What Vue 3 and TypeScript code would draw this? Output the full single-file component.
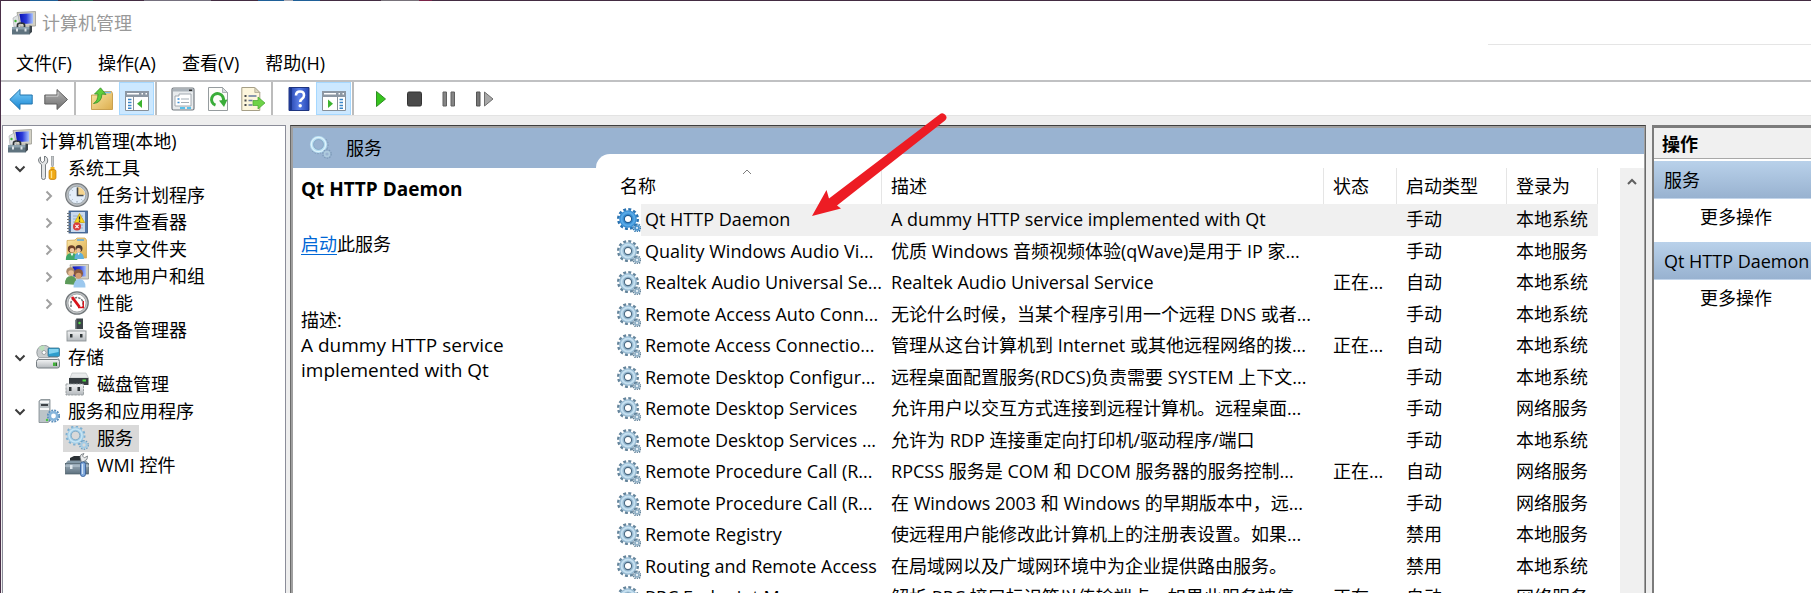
<script setup lang="ts">
interface TreeNode {
  label: string
  icon: string
  level: 0 | 1 | 2
  state?: 'open' | 'closed'
  selected?: boolean
}

interface Service {
  name: string
  description: string
  status: string
  startup: string
  logon: string
  selected?: boolean
}

interface Tool {
  id: string
  label: string
  active?: boolean
}

const menus: string[] = ['文件(F)', '操作(A)', '查看(V)', '帮助(H)']

const toolGroups: Tool[][] = [
  [
    { id: 'back', label: '后退' },
    { id: 'forward', label: '前进' },
  ],
  [
    { id: 'folder-up', label: '上一级' },
    { id: 'tree-pane', label: '显示/隐藏控制台树', active: true },
  ],
  [
    { id: 'properties', label: '属性' },
    { id: 'refresh', label: '刷新' },
    { id: 'export', label: '导出列表' },
  ],
  [
    { id: 'help', label: '帮助' },
    { id: 'action-pane', label: '显示/隐藏操作窗格', active: true },
  ],
  [
    { id: 'play', label: '启动服务' },
    { id: 'stop', label: '停止服务' },
    { id: 'pause', label: '暂停服务' },
    { id: 'restart', label: '重启动服务' },
  ],
]

const tree: TreeNode[] = [
  { label: '计算机管理(本地)', icon: 'computer', level: 0 },
  { label: '系统工具', icon: 'tools', level: 1, state: 'open' },
  { label: '任务计划程序', icon: 'clock', level: 2, state: 'closed' },
  { label: '事件查看器', icon: 'events', level: 2, state: 'closed' },
  { label: '共享文件夹', icon: 'shared', level: 2, state: 'closed' },
  { label: '本地用户和组', icon: 'users', level: 2, state: 'closed' },
  { label: '性能', icon: 'gauge', level: 2, state: 'closed' },
  { label: '设备管理器', icon: 'device', level: 2 },
  { label: '存储', icon: 'storage', level: 1, state: 'open' },
  { label: '磁盘管理', icon: 'disk', level: 2 },
  { label: '服务和应用程序', icon: 'server', level: 1, state: 'open' },
  { label: '服务', icon: 'gears', level: 2, selected: true },
  { label: 'WMI 控件', icon: 'toolbox', level: 2 },
]

const services: Service[] = [
  { name: 'Qt HTTP Daemon', description: 'A dummy HTTP service implemented with Qt', status: '', startup: '手动', logon: '本地系统', selected: true },
  { name: 'Quality Windows Audio Vi...', description: '优质 Windows 音频视频体验(qWave)是用于 IP 家...', status: '', startup: '手动', logon: '本地服务' },
  { name: 'Realtek Audio Universal Se...', description: 'Realtek Audio Universal Service', status: '正在...', startup: '自动', logon: '本地系统' },
  { name: 'Remote Access Auto Conn...', description: '无论什么时候，当某个程序引用一个远程 DNS 或者...', status: '', startup: '手动', logon: '本地系统' },
  { name: 'Remote Access Connectio...', description: '管理从这台计算机到 Internet 或其他远程网络的拨...', status: '正在...', startup: '自动', logon: '本地系统' },
  { name: 'Remote Desktop Configur...', description: '远程桌面配置服务(RDCS)负责需要 SYSTEM 上下文...', status: '', startup: '手动', logon: '本地系统' },
  { name: 'Remote Desktop Services', description: '允许用户以交互方式连接到远程计算机。远程桌面...', status: '', startup: '手动', logon: '网络服务' },
  { name: 'Remote Desktop Services ...', description: '允许为 RDP 连接重定向打印机/驱动程序/端口', status: '', startup: '手动', logon: '本地系统' },
  { name: 'Remote Procedure Call (R...', description: 'RPCSS 服务是 COM 和 DCOM 服务器的服务控制...', status: '正在...', startup: '自动', logon: '网络服务' },
  { name: 'Remote Procedure Call (R...', description: '在 Windows 2003 和 Windows 的早期版本中，远...', status: '', startup: '手动', logon: '网络服务' },
  { name: 'Remote Registry', description: '使远程用户能修改此计算机上的注册表设置。如果...', status: '', startup: '禁用', logon: '本地服务' },
  { name: 'Routing and Remote Access', description: '在局域网以及广域网环境中为企业提供路由服务。', status: '', startup: '禁用', logon: '本地系统' },
  { name: 'RPC Endpoint Mapper', description: '解析 RPC 接口标识符以传输端点。如果此服务被停...', status: '正在...', startup: '自动', logon: '网络服务' },
]

const actionSections: string[] = ['服务', 'Qt HTTP Daemon']
</script>

<template>
  <div class="window" lang="zh-CN">
    <svg class="sprite" aria-hidden="true">
      <defs>
        <linearGradient id="g-blue" x1="0" y1="0" x2="0" y2="1"><stop offset="0" stop-color="#7fd0fa" /><stop offset="1" stop-color="#1583d2" /></linearGradient>
        <linearGradient id="g-grey" x1="0" y1="0" x2="0" y2="1"><stop offset="0" stop-color="#b5b5b5" /><stop offset="1" stop-color="#6d6d6d" /></linearGradient>
        <linearGradient id="g-folder" x1="0" y1="0" x2="1" y2="1"><stop offset="0" stop-color="#fbe6a6" /><stop offset="1" stop-color="#dcae4e" /></linearGradient>
        <linearGradient id="g-screen" x1="0" y1="0" x2="1" y2="0"><stop offset="0" stop-color="#0a12b4" /><stop offset=".5" stop-color="#2a3ad8" /><stop offset="1" stop-color="#a9c4ff" /></linearGradient>
        <linearGradient id="g-help" x1="0" y1="0" x2="1" y2="0"><stop offset="0" stop-color="#1f3da6" /><stop offset=".5" stop-color="#5b80e8" /><stop offset="1" stop-color="#2545b4" /></linearGradient>
        <linearGradient id="g-metal" x1="0" y1="0" x2="0" y2="1"><stop offset="0" stop-color="#f3f4f5" /><stop offset="1" stop-color="#b3b8bc" /></linearGradient>
        <linearGradient id="g-steel" x1="0" y1="0" x2="0" y2="1"><stop offset="0" stop-color="#9fb0bd" /><stop offset="1" stop-color="#5d707e" /></linearGradient>
      </defs>

      <symbol id="i-computer" viewBox="0 0 24 24">
        <path d="M5 1.500 23.500 .5v14.500L8 15.500z" fill="#d3d1c5" stroke="#9b9b93" stroke-width=".8" />
        <path d="M7.500 3 21 2.200V12.500L9 13z" fill="url(#g-screen)" />
        <path d="M1 7l5-3 2 11-6 1z" fill="#dfe2e4" stroke="#a2a6aa" stroke-width=".6" />
        <circle cx="3.500" cy="10" r="1.200" fill="#3eb536" />
        <path d="M5.500 16v-2q0-2 3.500-2t3.500 2v2" fill="none" stroke="#2d3336" stroke-width="1.700" />
        <path d="M0 16h19l-1 7.500H0z" fill="#5f737f" /><path d="M0 16h19v2.500H0z" fill="#8ba0ac" />
        <path d="M4 17.500h2v3H4zM12.500 17.500h2v3h-2z" fill="#dde4e8" /><path d="M17.500 14.500 20 15v6l-2.500 2z" fill="#3c454b" />
      </symbol>
      <symbol id="i-tools" viewBox="0 0 24 24">
        <path d="M2.500 1v4l2 1.500 2-1.500V0q4 1.500 3 6-.3 1.500-2 2.500v13q0 2-2 2t-2-2v-13Q.5 7 .5 4 .7 2 2.500 1z" transform="translate(2)" fill="#e2e4e5" stroke="#777d81" stroke-width="1" />
        <path d="M15.500 0h2v9l-1 3-1-3z" fill="#c5c8ca" stroke="#82878a" stroke-width=".6" />
        <path d="M14.500 11h4v2l-1 1.200h-2l-1-1.200z" fill="#f3b521" /><rect x="13" y="13.500" width="7" height="10" rx="2" fill="#f0aa16" stroke="#bd7b08" stroke-width=".7" /><path d="M15.500 15v7" stroke="#ffe18a" stroke-width="1.300" />
      </symbol>
      <symbol id="i-clock" viewBox="0 0 24 24">
        <circle cx="12" cy="12" r="11.300" fill="#b9bdc0" stroke="#777b7e" stroke-width="1.200" /><circle cx="12" cy="12" r="8.800" fill="#e4eefa" stroke="#8d969c" stroke-width=".7" />
        <path d="M12 12V4a8 8 0 0 1 8 8z" fill="#f5d48f" /><path d="M12.500 4.500v8h6" fill="none" stroke="#454a4e" stroke-width="1.600" />
        <path d="M12 19.500v-1.300M4.500 12h1.300M6.700 6.700l.8.800M6.700 17.300l.8-.8M17.300 17.300l-.8-.8" stroke="#8798a8" stroke-width="1" />
      </symbol>
      <symbol id="i-events" viewBox="0 0 24 24">
        <rect x="4" y="1" width="18.500" height="22" fill="#4f75a9" stroke="#3b587f" stroke-width=".8" /><path d="M6 2h14v20H6z" fill="#c9d9ed" /><path d="M8 6h10M8 9h10M8 12h10M8 15h10M8 18h10" stroke="#88a4c8" stroke-width=".8" />
        <path d="M2 3.500h4M2 6.500h4M2 9.500h4M2 12.500h4M2 15.500h4M2 18.500h4M2 21.500h4" stroke="#6c747b" stroke-width="1.200" />
        <path d="M14.500 3.500 19.500 12.500h-10z" fill="#f9d923" stroke="#c8a107" stroke-width=".7" /><path d="M14.500 6.500v3M14.500 10.400v1.300" stroke="#222" stroke-width="1.300" />
        <circle cx="12" cy="16.500" r="4" fill="#d93c3c" /><path d="m10.400 14.900 3.200 3.200m0-3.200-3.200 3.200" stroke="#fff" stroke-width="1.100" />
      </symbol>
      <symbol id="i-shared" viewBox="0 0 24 24">
        <path d="M2 21V3.500L10 3l2-2h8l1.500 2v18z" fill="url(#g-folder)" stroke="#cba24b" stroke-width=".7" /><path d="M12 3h7" stroke="#5aa9e0" stroke-width="1.500" />
        <circle cx="6.500" cy="12" r="3.700" fill="#6e3f26" /><circle cx="7" cy="13.300" r="2.300" fill="#f3c9a0" /><path d="M.8 23q0-7 6-7t5.500 7z" fill="#3fa768" /><path d="m5.500 16.200 1.500 3 1.500-3z" fill="#fff" />
        <circle cx="14" cy="11.500" r="3.500" fill="#4f3a2e" /><circle cx="13.500" cy="13.200" r="2.300" fill="#f0c49c" /><path d="M9.500 22q0-6.500 4.500-6.500T19 22z" fill="#5fb0de" /><path d="m12.500 15.800 1.200 2.500 1.200-2.500z" fill="#fff" />
      </symbol>
      <symbol id="i-users" viewBox="0 0 24 24">
        <path d="M5 .8 23.500 .3V15H7z" fill="#d3d1c5" stroke="#9b9b93" stroke-width=".8" /><path d="M7.500 2.500 21 2v10.500H8.500z" fill="url(#g-screen)" />
        <circle cx="5.500" cy="7.500" r="4.200" fill="#a98a6b" /><circle cx="6" cy="9" r="2.800" fill="#e9bd94" /><path d="M0 20q0-8 6-8t6 9z" fill="#5c9a59" />
        <circle cx="13.500" cy="9.500" r="4.500" fill="#8b5a3c" /><circle cx="13.500" cy="11.700" r="3" fill="#d49c70" /><path d="M8.500 23.500q0-8.500 6-8.500t6 8.500z" fill="#9cc8ee" />
      </symbol>
      <symbol id="i-gauge" viewBox="0 0 24 24">
        <circle cx="12" cy="12" r="11.200" fill="#c3c6c8" stroke="#74797c" stroke-width="1.300" /><circle cx="12" cy="12" r="9" fill="#fff" stroke="#8f9497" stroke-width=".7" />
        <path d="M6 16V11q1.500-4 6-4.500 4.500.5 6 4.500v5" fill="none" stroke="#6e7477" stroke-width="1.500" stroke-dasharray="2.500 1" /><path d="m7 6 7.500 10" stroke="#d8131b" stroke-width="2.800" /><path d="M18.300 10v6.500H13" fill="none" stroke="#d8131b" stroke-width="1.400" />
      </symbol>
      <symbol id="i-device" viewBox="0 0 24 24">
        <path d="m10 3 1.500-2.500H18V14h-8z" fill="#3d4549" /><path d="m10 3 1.500-2.500V14H10z" fill="#7c868b" /><circle cx="14.500" cy="5" r="1.200" fill="#54db46" />
        <path d="M2 13 5 11h13l2.500 2z" fill="#e8eaeb" /><rect x="2" y="13" width="19" height="10" fill="url(#g-metal)" stroke="#8f9598" stroke-width=".9" /><path d="M5 16h2.500v3.500H5zM15 16h2.500v3.500H15z" fill="#32383b" />
      </symbol>
      <symbol id="i-storage" viewBox="0 0 24 24">
        <circle cx="8" cy="7.500" r="7.200" fill="#c8ccce" stroke="#838a8e" stroke-width=".8" /><path d="M8 7.500 2.500 3a7 7 0 0 1 6-2.500z" fill="#b9dfba" /><circle cx="8" cy="7.500" r="2" fill="#fff" stroke="#8b9296" stroke-width=".8" />
        <rect x="12" y="3" width="11.500" height="8.500" rx="1" fill="#2d9dcc" stroke="#3d6f88" stroke-width=".8" /><path d="M13 4h9.500v3L13 9z" fill="#83d3f0" />
        <path d="M1 15 3.500 12.500h18L23.500 15z" fill="#f1f2f3" stroke="#92989b" stroke-width=".7" /><rect x=".5" y="14.500" width="23" height="8.500" rx="2" fill="url(#g-metal)" stroke="#767e83" stroke-width="1" /><path d="M17 17.500h2.500V21H17z" fill="#3eb536" /><path d="M19.500 17.500H21V21h-1.500z" fill="#276a26" />
      </symbol>
      <symbol id="i-disk" viewBox="0 0 24 24">
        <path d="M5 6 7 1h14l2.500 5z" fill="#e8eaeb" stroke="#b3b8bb" stroke-width=".6" /><path d="M4 6h19.500v7H4z" fill="#363c40" /><path d="M17.500 8.500H21" stroke="#4cd343" stroke-width="2" />
        <rect x="1" y="12" width="17.500" height="11" fill="url(#g-metal)" stroke="#92989b" stroke-width=".9" stroke-dasharray="2.500 .7" /><path d="M4 15h2.500v4H4zM12.500 15H15v4h-2.500z" fill="#32383b" />
      </symbol>
      <symbol id="i-server" viewBox="0 0 24 24">
        <path d="M3 2 5 .5h9V22l-2 1.500H3z" fill="#bcc4c8" stroke="#7f888d" stroke-width=".8" /><path d="M4 3h9M4 10h9" stroke="#f5f7f8" stroke-width="2" /><path d="M5 6h7" stroke="#2f3539" stroke-width="1.800" /><circle cx="11" cy="21" r="1.200" fill="#4cc63f" />
        <circle cx="17.500" cy="17" r="5.600" fill="none" stroke="#5d8fba" stroke-width="2" stroke-dasharray="1.900 1.032" /><circle cx="17.500" cy="17" r="3.700" fill="#fff" stroke="#86b5dc" stroke-width="2.600" />
      </symbol>
      <symbol id="i-gears" viewBox="0 0 24 24">
        <circle cx="10.500" cy="9.500" r="9" fill="none" stroke="#7db0d2" stroke-width="2" stroke-dasharray="2.300 2.410" /><circle cx="10.500" cy="9.500" r="6.300" fill="none" stroke="#9ccae6" stroke-width="4" /><circle cx="10.500" cy="9.500" r="6.500" fill="none" stroke="#c7e5f4" stroke-width="1.600" /><circle cx="10.500" cy="9.500" r="4.300" fill="none" stroke="#6e9cba" stroke-width=".7" />
        <circle cx="19" cy="19" r="4.200" fill="none" stroke="#72a3c5" stroke-width="1.500" stroke-dasharray="1.500 1.140" /><circle cx="19" cy="19" r="2.600" fill="none" stroke="#a3cbe5" stroke-width="1.900" />
      </symbol>
      <symbol id="i-gears-pale" viewBox="0 0 24 24">
        <circle cx="9.500" cy="8.500" r="6.800" fill="none" stroke="#b5dcf0" stroke-width="3.600" /><circle cx="9.500" cy="8.500" r="7.200" fill="none" stroke="#dff3fb" stroke-width="1.200" /><circle cx="9.500" cy="8.500" r="5" fill="none" stroke="#7599b8" stroke-width=".6" />
        <path d="M17 3q4 5 1 10M3 15q4 4 9 2" fill="none" stroke="#7e9cb9" stroke-width="1" stroke-dasharray="1.500 1.500" />
        <circle cx="18" cy="18" r="4.200" fill="none" stroke="#7e9cb9" stroke-width="1.300" stroke-dasharray="1.500 1.140" /><circle cx="18" cy="18" r="2.400" fill="none" stroke="#aecbde" stroke-width="1.600" />
      </symbol>
      <symbol id="i-service" viewBox="0 0 24 24">
        <circle cx="11" cy="11" r="9.700" fill="none" stroke="#64849b" stroke-width="2.600" stroke-dasharray="2.900 2.179" /><circle cx="11" cy="11" r="6.200" fill="#fff" stroke="#98bbd3" stroke-width="5.200" /><circle cx="11" cy="11" r="6.500" fill="none" stroke="#c6e0f0" stroke-width="1.900" /><circle cx="11" cy="11" r="3.600" fill="none" stroke="#4d6b83" stroke-width="1.100" />
        <circle cx="20" cy="20" r="3.600" fill="none" stroke="#64849b" stroke-width="1.900" stroke-dasharray="1.300 .962" /><circle cx="20" cy="20" r="2" fill="#e6f0f6" stroke="#8fafc5" stroke-width="1.700" />
      </symbol>
      <symbol id="i-service-on" viewBox="0 0 24 24">
        <circle cx="11" cy="11" r="9.700" fill="none" stroke="#2a72b0" stroke-width="2.600" stroke-dasharray="2.900 2.179" /><circle cx="11" cy="11" r="6.200" fill="#fff" stroke="#3a8fd4" stroke-width="5.200" /><circle cx="11" cy="11" r="6.500" fill="none" stroke="#58a9e6" stroke-width="1.900" /><circle cx="11" cy="11" r="3.600" fill="none" stroke="#1f5c93" stroke-width="1.100" />
        <circle cx="20" cy="20" r="3.600" fill="none" stroke="#3479b0" stroke-width="1.900" stroke-dasharray="1.300 .962" /><circle cx="20" cy="20" r="2" fill="#cfe4f5" stroke="#4a92cc" stroke-width="1.700" />
      </symbol>
      <symbol id="i-toolbox" viewBox="0 0 24 24">
        <path d="M5 8V5l4-2h7v5" fill="#2b3135" /><path d="M0 11 3 7.500h18L24 11z" fill="#8398a6" /><rect x=".5" y="10.500" width="23" height="10.500" fill="url(#g-steel)" stroke="#4e5e69" stroke-width=".7" /><path d="M0 13h24" stroke="#bccbd5" stroke-width="1" /><path d="M5 12h2.500v4H5z" fill="#dfe7ec" />
        <path d="M15 4q0-3 4-3.500L17.500 3l1.800 1.800L22.500 3q.5 4-3 5l-3 1.500z" fill="#e9ebec" stroke="#6d7478" stroke-width=".8" /><rect x="15.500" y="9" width="5" height="14.500" rx="2.300" fill="#7fa9dc" stroke="#39609b" stroke-width=".9" /><path d="M17.500 11v10" stroke="#d4e5f8" stroke-width="1.300" />
      </symbol>

      <symbol id="i-back" viewBox="0 0 24 24"><path d="M.8 12.500 11 2.500V8h12.200v9H11v5.500z" fill="url(#g-blue)" stroke="#2374ad" stroke-width="1" /></symbol>
      <symbol id="i-forward" viewBox="0 0 24 24"><path d="M23.500 12.500 13 2.500V8H.8v9H13v5.500z" fill="url(#g-grey)" stroke="#5f5f5f" stroke-width="1" /><path d="M2 9.200h12V5" fill="none" stroke="#c9c9c9" stroke-width="1" /></symbol>
      <symbol id="i-folder-up" viewBox="0 0 24 24"><path d="M1.500 22.500V8H10l2-3.500h9.500l1 2v16z" fill="url(#g-folder)" stroke="#c49a45" stroke-width=".9" /><path d="M13 5.500h8" stroke="#7cbde9" stroke-width="1.600" /><path d="M3.500 16.500Q8 14 8 7H4.500L10.500 .8l5.500 6.700-4-.5q-.5 9-8.500 9.500z" fill="#5fcd3a" stroke="#37922a" stroke-width=".8" /></symbol>
      <symbol id="i-tree-pane" viewBox="0 0 24 24"><path d="M.5 4.500h23v19H.5z" fill="#fff" stroke="#868f98" stroke-width="1" /><path d="M0 4h24v6H0z" fill="#8c97a3" /><path d="M2 6.800h12M16.500 6.800h1.500M20.500 6.800H22" stroke="#fff" stroke-width="1.500" /><path d="M8.500 10v13" stroke="#868f98" stroke-width="1" /><path d="M3 12.500h3.500M3 15.500h3.500M3 18.500h3.500M3 21.300h3.500" stroke="#3b86c8" stroke-width="1.400" /><path d="M17 12.500v8.500l-5-4.300z" fill="#3cb32f" /></symbol>
      <symbol id="i-action-pane" viewBox="0 0 24 24"><path d="M.5 4.500h23v19H.5z" fill="#fff" stroke="#868f98" stroke-width="1" /><path d="M0 4h24v6H0z" fill="#8c97a3" /><path d="M2 6.800h12M16.500 6.800h1.500M20.500 6.800H22" stroke="#fff" stroke-width="1.500" /><path d="M15.500 10v13" stroke="#868f98" stroke-width="1" /><path d="M17.500 12.500H21M17.500 15.500H21M17.500 18.500H21M17.500 21.300H21" stroke="#3b86c8" stroke-width="1.400" /><path d="M6 12.500v8.500l5-4.300z" fill="#3cb32f" /></symbol>
      <symbol id="i-properties" viewBox="0 0 24 24"><rect x="1" y="1" width="22" height="22" rx="1.500" fill="#e8ebed" stroke="#737a80" stroke-width="1.200" /><path d="M2 2h20v2.500H2z" fill="#aab2b9" /><path d="M18 3.300h3" stroke="#333" stroke-width="1.500" /><path d="M4 9h4V7h12v12H4z" fill="#fff" stroke="#9aa2a9" stroke-width=".9" /><path d="M6.500 12h2M6.500 15.500h2" stroke="#3b8fd6" stroke-width="1.600" /><path d="M10 12h8M10 15.500h8" stroke="#a4adb5" stroke-width="1.200" /><path d="M9 21h5M16 21h4" stroke="#58c1ec" stroke-width="2" /></symbol>
      <symbol id="i-refresh" viewBox="0 0 24 24"><path d="M2.500.5h14l5 5v18h-19z" fill="#fdfdfa" stroke="#969c9f" stroke-width="1" /><path d="M16.500.5v5h5z" fill="#d9dddf" stroke="#969c9f" stroke-width=".7" /><path d="M9.500 18.200a6 6 0 1 1 7.800-4" fill="none" stroke="#3aad38" stroke-width="3" /><path d="m13 13.500 8.500-1-3.500 7.500z" fill="#3aad38" /></symbol>
      <symbol id="i-export" viewBox="0 0 24 24"><path d="M.8.5h13l5 5v18H.8z" fill="#fdf6dc" stroke="#a69f87" stroke-width="1" /><path d="M13.800.5v5h5z" fill="#dcd6be" stroke="#a69f87" stroke-width=".7" /><path d="M3.500 9h2M3.500 13.500h2M3.500 18h2" stroke="#4a4a4a" stroke-width="1.800" /><path d="M7.500 9h8M7.500 13.500h4M7.500 18h4" stroke="#667a9e" stroke-width="1.400" /><path d="M12 13.500h5v-3.500l7 6-7 6v-3.500h-5z" fill="#6ed348" stroke="#45a52f" stroke-width=".7" /></symbol>
      <symbol id="i-help" viewBox="0 0 24 24"><path d="M2 .5h20v23H2z" fill="url(#g-help)" stroke="#1e3580" stroke-width="1" /><path d="M4 1v22" stroke="#15307f" stroke-width="1.400" /><path d="M9 8.500q0-4 4-4t4 3.700q0 2.300-2 3.600-1.800 1.200-1.800 3.200" fill="none" stroke="#fff" stroke-width="2.600" /><circle cx="13.200" cy="18.700" r="1.700" fill="#fff" /></symbol>
      <symbol id="i-play" viewBox="0 0 24 24"><path d="M8.500 4.500v15l9-7.500z" fill="#37c41e" stroke="#2f8f23" stroke-width="1" /></symbol>
      <symbol id="i-stop" viewBox="0 0 24 24"><rect x="4.500" y="5" width="14" height="14" rx="1.500" fill="#4a4a4a" stroke="#333" stroke-width="1" /></symbol>
      <symbol id="i-pause" viewBox="0 0 24 24"><path d="M5 5h3.500v14H5zM13 5h3.500v14H13z" fill="#858585" stroke="#606060" stroke-width="1" /></symbol>
      <symbol id="i-restart" viewBox="0 0 24 24"><path d="M3.500 5H7v14H3.500z" fill="#777" stroke="#555" stroke-width="1" /><path d="M11.500 5v14l8.500-7z" fill="#a8a8a8" stroke="#6d6d6d" stroke-width="1" /></symbol>
    </svg>

    <div class="backdrop"></div>

    <header class="titlebar">
      <svg class="icon"><use href="#i-computer" /></svg>
      <h1>计算机管理</h1>
      <span class="title-rule"></span>
    </header>

    <nav class="menubar">
      <button v-for="menu in menus" :key="menu" type="button">{{ menu }}</button>
    </nav>

    <div class="toolbar" role="toolbar">
      <div v-for="(group, index) in toolGroups" :key="index" class="tool-group">
        <button
          v-for="tool in group"
          :key="tool.id"
          type="button"
          :class="{ active: tool.active }"
          :aria-label="tool.label"
        >
          <svg class="icon"><use :href="`#i-${tool.id}`" /></svg>
        </button>
      </div>
    </div>

    <main class="workspace">
      <ul class="tree">
        <li v-for="node in tree" :key="node.label" :class="`level-${node.level}`">
          <button v-if="node.state" type="button" class="twisty" :class="node.state" :aria-label="node.label">
            <svg viewBox="0 0 12 12"><path :d="node.state === 'open' ? 'M1.500 3.500 6 8l4.500-4.500' : 'M3.500 1.500 8 6l-4.500 4.500'" /></svg>
          </button>
          <span v-else-if="node.level > 0" class="twisty"></span>
          <span class="node" :class="{ selected: node.selected }">
            <svg class="icon"><use :href="`#i-${node.icon}`" /></svg>
            {{ node.label }}
          </span>
        </li>
      </ul>

      <section class="view">
        <div class="view-header">
          <svg class="icon"><use href="#i-gears-pale" /></svg>
          <h2>服务</h2>
        </div>

        <aside class="detail">
          <h3>Qt HTTP Daemon</h3>
          <p class="action"><a href="#start">启动</a>此服务</p>
          <p class="caption">描述:</p>
          <p class="text">A dummy HTTP service implemented with Qt</p>
        </aside>

        <div class="list">
          <table>
            <colgroup>
              <col class="col-name" />
              <col />
              <col class="col-status" />
              <col class="col-startup" />
              <col class="col-logon" />
            </colgroup>
            <thead>
              <tr>
                <th>
                  名称
                  <svg class="sort" viewBox="0 0 10 6"><path d="M1 5l4-4 4 4" /></svg>
                </th>
                <th>描述</th>
                <th>状态</th>
                <th>启动类型</th>
                <th>登录为</th>
              </tr>
            </thead>
            <tbody>
              <tr v-for="(service, index) in services" :key="index" :class="{ selected: service.selected }">
                <td>
                  <div class="name">
                    <svg class="icon"><use :href="service.selected ? '#i-service-on' : '#i-service'" /></svg>
                    <span>{{ service.name }}</span>
                  </div>
                </td>
                <td>{{ service.description }}</td>
                <td>{{ service.status }}</td>
                <td>{{ service.startup }}</td>
                <td>{{ service.logon }}</td>
              </tr>
            </tbody>
          </table>
          <div class="scrollbar">
            <button type="button" aria-label="向上滚动">
              <svg viewBox="0 0 10 8"><path d="M1 6l4-4 4 4" /></svg>
            </button>
          </div>
        </div>
      </section>

      <aside class="actions">
        <h2>操作</h2>
        <section v-for="section in actionSections" :key="section">
          <h3>{{ section }}</h3>
          <button type="button">更多操作</button>
        </section>
      </aside>
    </main>

    <svg class="pointer" viewBox="0 0 140 106" aria-hidden="true">
      <path d="M130.500 1.500a4 4 0 0 1 5.500 6L28 92.500l4 3L3 103 17.500 77l2.500 8.500z" />
    </svg>
  </div>
</template>

<style>
body {
  margin: 0;
}
</style>

<style scoped>
.window {
  position: relative;
  box-sizing: border-box;
  display: flex;
  flex-direction: column;
  height: 100vh;
  overflow: hidden;
  border-left: 1px solid #4a2f48;
  background: #fff;
  color: #000;
  font: 18px/26px 'Open Sans', 'Noto Sans CJK SC', sans-serif;
}

h1, h2, h3, p, ul {
  margin: 0;
  padding: 0;
  font-size: inherit;
  font-weight: 400;
}

button {
  padding: 0;
  border: 0;
  background: none;
  color: inherit;
  font: inherit;
}

.sprite {
  position: absolute;
  width: 0;
  height: 0;
}

.icon {
  display: block;
  flex: none;
  width: 24px;
  height: 24px;
}

/* Sliver of the desktop that shows above the window */
.backdrop {
  flex: none;
  height: 1px;
  background: linear-gradient(
    90deg,
    #432c42 29px, #1f6098 29px 57px, #432c42 57px 70px, #2f6b55 70px 92px,
    #432c42 92px 143px, #75707e 143px 210px, #432c42 210px 257px, #1f6098 257px 283px,
    #a9a9b2 283px 292px, #1f6098 292px 319px, #432c42 319px 380px, #77727a 380px 418px,
    #7a2348 418px 431px, #432c42 431px
  );
}

.titlebar {
  display: flex;
  flex: none;
  align-items: center;
  gap: 6px;
  box-sizing: border-box;
  height: 47px;
  padding: 0 0 3px 11px;
  color: #999;
}

.title-rule {
  align-self: flex-end;
  width: 323px;
  height: 1px;
  margin-left: auto;
  background: #e5e5e5;
}

.menubar {
  display: flex;
  flex: none;
  align-items: flex-start;
  gap: 26px;
  height: 32px;
  padding-left: 15px;
  border-bottom: 2px solid #c0c1c3;
}

.menubar button {
  height: 30px;
}

.toolbar {
  display: flex;
  flex: none;
  height: 33px;
  padding-left: 2px;
  border-bottom: 1px solid #e3e3e3;
}

.tool-group {
  display: flex;
}

.tool-group + .tool-group {
  margin-left: 1px;
  padding-left: 8px;
  border-left: 2px solid #bcbcbc;
}

.tool-group button {
  box-sizing: border-box;
  display: flex;
  align-items: center;
  justify-content: center;
  width: 35px;
  border: 1px solid transparent;
}

.tool-group button.active {
  border-color: #a6d8ff;
  background: #cce8ff;
}

.workspace {
  display: flex;
  flex: 1;
  min-height: 0;
  padding: 9px 0 0 1px;
  background: #eee;
}

.tree {
  box-sizing: border-box;
  flex: none;
  width: 284px;
  margin-right: 4px;
  padding-top: 2px;
  border: 1px solid #8b8d99;
  border-bottom: 0;
  background: #fff;
  list-style: none;
}

.tree li {
  display: flex;
  align-items: center;
  height: 27px;
  padding-left: 3px;
}

.tree .level-1 {
  padding-left: 5px;
}

.tree .level-2 {
  padding-left: 34px;
}

.twisty {
  display: flex;
  align-items: center;
  justify-content: center;
  width: 24px;
  height: 24px;
  margin-right: 2px;
}

.twisty svg {
  width: 12px;
  height: 12px;
  fill: none;
  stroke: #a0a0a0;
  stroke-width: 2;
}

.twisty.open svg {
  stroke: #3c3c3c;
}

.node {
  box-sizing: border-box;
  display: flex;
  align-items: center;
  gap: 8px;
  height: 27px;
  padding: 0 6px 2px 2px;
}

.node.selected {
  background: #d9d9d9;
}

.view {
  display: grid;
  flex: 1;
  grid-template-rows: 26px 14px minmax(0, 1fr);
  grid-template-columns: 303px minmax(0, 1fr);
  min-width: 0;
  padding: 2px 1px 0 2px;
  border: 1px solid #6b6b6b;
  border-top-color: #3f3f3f;
  border-bottom: 0;
  background: #a0a0a0;
}

.view-header {
  display: flex;
  grid-row: 1 / 3;
  grid-column: 1 / 3;
  align-items: center;
  gap: 13px;
  padding-left: 16px;
  background: #99b3d1;
}

.detail {
  grid-row: 3;
  grid-column: 1;
  padding: 8px 40px 0 8px;
  background: #fff;
}

.detail h3 {
  font-size: 19px;
  font-weight: 700;
}

.detail .action {
  margin: 29px 0 50px;
}

.detail a {
  color: #0067d6;
  text-underline-offset: 3px;
}

.detail .text {
  font-size: 19px;
  line-height: 25px;
}

.list {
  display: flex;
  grid-row: 2 / 4;
  grid-column: 2;
  gap: 22px;
  padding: 14px 0 0 16px;
  overflow: hidden;
  border-top-left-radius: 14px;
  background: #fff;
}

table {
  flex: 1;
  align-self: flex-start;
  min-width: 0;
  table-layout: fixed;
  border-collapse: separate;
  border-spacing: 0;
}

.col-name {
  width: 270px;
}

.col-status {
  width: 73px;
}

.col-startup {
  width: 110px;
}

.col-logon {
  width: 91px;
}

th,
td {
  padding: 0 0 2px 9px;
  overflow: hidden;
  font-weight: 400;
  text-align: left;
  white-space: nowrap;
}

th {
  position: relative;
  height: 34px;
  padding-bottom: 0;
  border-right: 1px solid #e5e5e5;
}

thead tr {
  height: 36px;
}

th:first-child {
  padding-left: 8px;
}

.sort {
  position: absolute;
  top: 1px;
  left: 50%;
  width: 10px;
  height: 6px;
  margin-left: -5px;
  fill: none;
  stroke: #7d7d7d;
}

tbody tr {
  height: 31px;
}

tbody tr:nth-child(odd) {
  height: 32px;
}

td:first-child {
  height: inherit;
  padding: 0 0 0 5px;
}

.name {
  display: flex;
  align-items: center;
  height: inherit;
}

.name span {
  flex: 1;
  padding: 0 0 2px 4px;
}

.selected td:not(:first-child),
.selected .name span {
  background: #f0f0f0;
}

.selected .name span {
  line-height: 30px;
}

.scrollbar {
  flex: none;
  width: 24px;
  background: #f0f0f0;
}

.scrollbar button {
  display: flex;
  align-items: center;
  justify-content: center;
  width: 24px;
  height: 27px;
}

.scrollbar svg {
  width: 10px;
  height: 8px;
  fill: none;
  stroke: #606060;
  stroke-width: 2;
}

.actions {
  box-sizing: border-box;
  flex: none;
  width: 159px;
  margin-left: 6px;
  overflow: hidden;
  border: solid #7b7b7b;
  border-width: 3px 0 0 2px;
  background: #fff;
}

.actions h2 {
  height: 30px;
  margin-bottom: 2px;
  padding-left: 8px;
  border-bottom: 1px solid #a8a8a8;
  background: #f0f0f0;
  font-weight: 700;
  line-height: 32px;
}

.actions section {
  height: 81px;
}

.actions h3 {
  height: 37px;
  padding-left: 10px;
  border-bottom: 1px solid #c3d5ea;
  background: linear-gradient(#b9d1ea, #98b2d0);
  line-height: 38px;
  white-space: nowrap;
}

.actions section button {
  padding: 5px 0 0 46px;
}

.pointer {
  position: absolute;
  top: 113px;
  left: 808px;
  width: 140px;
  height: 106px;
  fill: #ed1c24;
}
</style>
